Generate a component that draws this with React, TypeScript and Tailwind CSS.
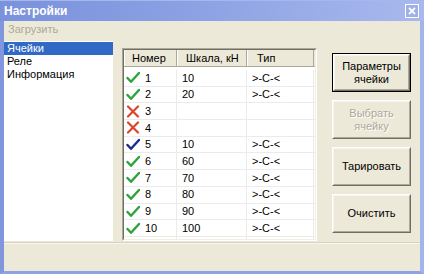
import React from "react";

const FONT = { fontFamily: '"Liberation Sans", Arial, sans-serif' };

type Status = "ok" | "bad" | "sel";
const rows: { n: number; s: Status; scale: string; type: string }[] = [
  { n: 1, s: "ok", scale: "10", type: ">-C-<" },
  { n: 2, s: "ok", scale: "20", type: ">-C-<" },
  { n: 3, s: "bad", scale: "", type: "" },
  { n: 4, s: "bad", scale: "", type: "" },
  { n: 5, s: "sel", scale: "10", type: ">-C-<" },
  { n: 6, s: "ok", scale: "60", type: ">-C-<" },
  { n: 7, s: "ok", scale: "70", type: ">-C-<" },
  { n: 8, s: "ok", scale: "80", type: ">-C-<" },
  { n: 9, s: "ok", scale: "90", type: ">-C-<" },
  { n: 10, s: "ok", scale: "100", type: ">-C-<" },
];

function Icon({ s }: { s: Status }) {
  if (s === "bad") {
    return (
      <svg width="14" height="13" viewBox="0 0 14 13" className="shrink-0">
        <path d="M2 1.5 L12 11.5 M12 1.5 L2 11.5" stroke="#d9462c" strokeWidth="2.2" strokeLinecap="round" />
      </svg>
    );
  }
  const c = s === "sel" ? "#1c2a8c" : "#2ea33a";
  return (
    <svg width="14" height="13" viewBox="0 0 14 13" className="shrink-0">
      <path d="M1.5 7 L5 10.8 L13 2" stroke={c} strokeWidth="2.4" fill="none" strokeLinecap="round" strokeLinejoin="round" />
    </svg>
  );
}

function Btn({ children, def, disabled }: { children: React.ReactNode; def?: boolean; disabled?: boolean }) {
  return (
    <div className={`w-[79px] h-[39px] ${def ? "border border-black" : ""}`}>
      <div className="w-full h-full border border-t-white border-l-white border-r-[#716f64] border-b-[#716f64] bg-[#ece9d8]">
        <div className="w-full h-full border border-t-[#f5f4ee] border-l-[#f5f4ee] border-r-[#aca899] border-b-[#aca899] flex items-center justify-center text-center text-[11px] leading-[13px]">
          <span className={disabled ? "text-[#aca899] [text-shadow:1px_1px_0_#ffffff]" : "text-black"}>{children}</span>
        </div>
      </div>
    </div>
  );
}

export default function App() {
  return (
    <div style={FONT} className="w-[424px] h-[274px] flex flex-col bg-[#8ea2e4] select-none">
      {/* title bar */}
      <div className="h-[21px] shrink-0 flex items-center justify-between bg-gradient-to-r from-[#7a91dc] via-[#8ea3e4] to-[#a9b9ee] pl-[4px] pr-[5px] border-t border-[#a7b6ec]">
        <span className="text-white font-bold text-[12px] leading-none">Настройки</span>
        <div className="w-[14px] h-[14px] border border-white bg-[#9eb0ea] flex items-center justify-center">
          <svg width="8" height="8" viewBox="0 0 8 8">
            <path d="M1 1 L7 7 M7 1 L1 7" stroke="white" strokeWidth="1.8" />
          </svg>
        </div>
      </div>
      {/* body */}
      <div className="flex-1 flex flex-col bg-[#ece9d8] border-l-[4px] border-r-[4px] border-b-[3px] border-l-[#8196dc] border-r-[#a3b4ea] border-b-[#8ea2e4] text-[11px]">
        {/* menu */}
        <div className="h-[17px] shrink-0 flex items-center pl-[4px] text-[#aca899]">Загрузить</div>
        {/* main */}
        <div className="h-[204px] shrink-0 flex items-start">
          {/* list */}
          <div className="mt-[3px] w-[109px] h-[200px] bg-white flex flex-col pt-[1px]">
            <div className="h-[13px] bg-[#316ac5] text-white pl-[3px] leading-[13px]">Ячейки</div>
            <div className="h-[13px] pl-[3px] leading-[13px] text-black">Реле</div>
            <div className="h-[13px] pl-[3px] leading-[13px] text-black">Информация</div>
          </div>
          {/* table */}
          <div className="ml-[9px] mt-[10px] w-[195px] h-[193px] border border-t-[#aca899] border-l-[#aca899] border-r-white border-b-white">
            <div className="w-full h-full border border-t-[#716f64] border-l-[#716f64] border-r-[#f1efe2] border-b-[#f1efe2] bg-white flex flex-col">
              <div className="h-[17px] shrink-0 flex bg-[#ece9d8] border-b border-[#aca899]">
                <div className="w-[53px] border-l border-white border-r border-r-[#aca899] pl-[7px] flex items-center">Номер</div>
                <div className="w-[70px] border-l border-white border-r border-r-[#aca899] pl-[8px] flex items-center">Шкала, кН</div>
                <div className="w-[67px] border-l border-white border-r border-r-[#aca899] pl-[9px] flex items-center">Тип</div>
              </div>
              <div className="flex-1 flex flex-col pt-[3px] relative">
                {rows.map((r) => (
                  <div key={r.n} className="h-[16.7px] flex border-b border-[#ebebeb]">
                    <div className="w-[53px] flex items-center pl-[2px] gap-[5px] border-r border-[#ebebeb]">
                      <Icon s={r.s} />
                      <span>{r.n}</span>
                    </div>
                    <div className="w-[70px] flex items-center pl-[5px] border-r border-[#ebebeb]">{r.scale}</div>
                    <div className="w-[67px] flex items-center pl-[5px] border-r border-[#ebebeb]">{r.type}</div>
                  </div>
                ))}
                <div className="flex-1 flex">
                  <div className="w-[53px] border-r border-[#ebebeb]" />
                  <div className="w-[70px] border-r border-[#ebebeb]" />
                  <div className="w-[67px] border-r border-[#ebebeb]" />
                </div>
              </div>
            </div>
          </div>
          {/* buttons */}
          <div className="ml-[15px] mt-[15px] flex flex-col gap-[8px]">
            <Btn def>
              Параметры
              <br />
              ячейки
            </Btn>
            <Btn disabled>
              Выбрать
              <br />
              ячейку
            </Btn>
            <Btn>Тарировать</Btn>
            <Btn>Очистить</Btn>
          </div>
        </div>
        {/* status bar */}
        <div className="flex-1 border-t border-[#d6d2c2]">
          <div className="h-full border-t border-[#f7f6f0]" />
        </div>
      </div>
    </div>
  );
}
